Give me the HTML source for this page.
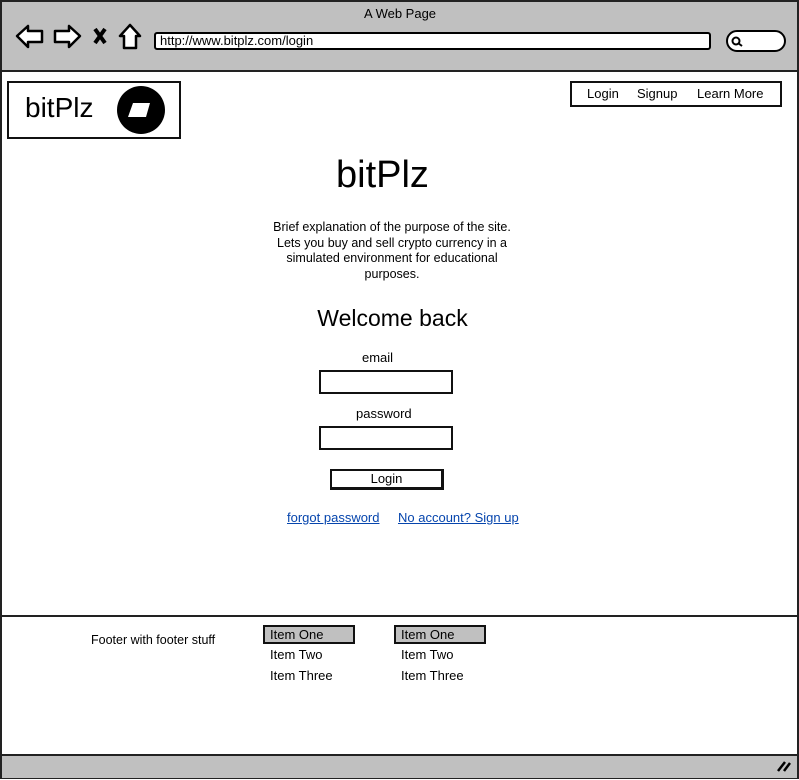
<!DOCTYPE html>
<html><head><style>
*{margin:0;padding:0;box-sizing:border-box}
body{width:799px;height:780px;position:relative;background:#fff;font-family:"Liberation Sans",sans-serif;color:#000;overflow:hidden}
.a{position:absolute}
.t{font-size:13px;white-space:nowrap}
</style></head><body>
<div class="a" style="left:0;top:0;width:799px;height:779px;border:2px solid #222;background:#fff"></div>
<div class="a" style="left:2px;top:2px;width:795px;height:70px;background:#c0c0c0;border-bottom:2px solid #222"></div>
<div class="a t" style="left:364px;top:6px;font-size:13px">A Web Page</div>
<svg class="a" style="left:14px;top:22px" width="130" height="30" viewBox="0 0 130 30">
<path d="M3 14 L14 4 L14 9 L28 9 L28 20 L14 20 L14 25 Z" fill="#fff" stroke="#000" stroke-width="2.5" stroke-linejoin="round"/>
<path d="M66 14 L55 4 L55 9 L41 9 L41 20 L55 20 L55 25 Z" fill="#fff" stroke="#000" stroke-width="2.5" stroke-linejoin="round"/>
<path d="M81 7 L91 21 M91 7 L81 21" stroke="#000" stroke-width="4"/>
<path d="M116 3 L106 14 L110 14 L110 26 L122 26 L122 14 L126 14 Z" fill="#fff" stroke="#000" stroke-width="2.5" stroke-linejoin="round"/>
</svg>
<div class="a" style="left:154px;top:32px;width:557px;height:18px;background:#fff;border:2px solid #000;border-radius:3px"></div>
<div class="a t" style="left:160px;top:33px;font-size:13px">http://www.bitplz.com/login</div>
<div class="a" style="left:726px;top:30px;width:60px;height:22px;background:#fff;border:2px solid #000;border-radius:11px"></div>
<svg class="a" style="left:730px;top:35px" width="14" height="14"><circle cx="6" cy="6" r="3.5" fill="none" stroke="#000" stroke-width="2"/><path d="M8 8 L12 11" stroke="#000" stroke-width="2"/></svg>

<div class="a" style="left:7px;top:81px;width:174px;height:58px;border:2px solid #111"></div>
<div class="a" style="left:25px;top:92px;font-size:28px">bitPlz</div>
<div class="a" style="left:117px;top:86px;width:48px;height:48px;border-radius:50%;background:#000"></div>
<svg class="a" style="left:117px;top:86px" width="48" height="48"><path d="M16 17 L33 17 L29 31 L11 31 Z" fill="#fff"/></svg>

<div class="a" style="left:570px;top:81px;width:212px;height:26px;border:2px solid #111"></div>
<div class="a t" style="left:587px;top:86px">Login</div>
<div class="a t" style="left:637px;top:86px">Signup</div>
<div class="a t" style="left:697px;top:86px">Learn More</div>

<div class="a" style="left:336px;top:154px;font-size:38px;white-space:nowrap">bitPlz</div>
<div class="a" style="left:242px;top:220px;width:300px;text-align:center;font-size:12.5px;line-height:15.5px">Brief explanation of the purpose of the site.<br>Lets you buy and sell crypto currency in a<br>simulated environment for educational<br>purposes.</div>
<div class="a" style="left:0;top:305px;width:785px;text-align:center;font-size:23px">Welcome back</div>
<div class="a t" style="left:362px;top:350px">email</div>
<div class="a" style="left:319px;top:370px;width:134px;height:24px;border:2px solid #111"></div>
<div class="a t" style="left:356px;top:406px">password</div>
<div class="a" style="left:319px;top:426px;width:134px;height:24px;border:2px solid #111"></div>
<div class="a" style="left:330px;top:469px;width:114px;height:21px;border:2px solid #111;border-right-width:3px;border-bottom-width:3px;text-align:center;font-size:13px;line-height:16px">Login</div>
<div class="a t" style="left:287px;top:510px;color:#0645ad;text-decoration:underline">forgot password</div>
<div class="a t" style="left:398px;top:510px;color:#0645ad;text-decoration:underline">No account? Sign up</div>

<div class="a" style="left:2px;top:615px;width:795px;height:2px;background:#222"></div>
<div class="a t" style="left:91px;top:633px;font-size:12.5px">Footer with footer stuff</div>
<div class="a" style="left:263px;top:625px;width:92px;height:19px;background:#c0c0c0;border:2px solid #111"></div>
<div class="a t" style="left:270px;top:627px">Item One</div>
<div class="a t" style="left:270px;top:647px">Item Two</div>
<div class="a t" style="left:270px;top:668px">Item Three</div>
<div class="a" style="left:394px;top:625px;width:92px;height:19px;background:#c0c0c0;border:2px solid #111"></div>
<div class="a t" style="left:401px;top:627px">Item One</div>
<div class="a t" style="left:401px;top:647px">Item Two</div>
<div class="a t" style="left:401px;top:668px">Item Three</div>

<div class="a" style="left:2px;top:754px;width:795px;height:24px;background:#c0c0c0;border-top:2px solid #222"></div>
<svg class="a" style="left:776px;top:759px" width="16" height="14"><path d="M2 12 L9 3 M8 12 L14 4" stroke="#000" stroke-width="2.5"/></svg>
</body></html>
